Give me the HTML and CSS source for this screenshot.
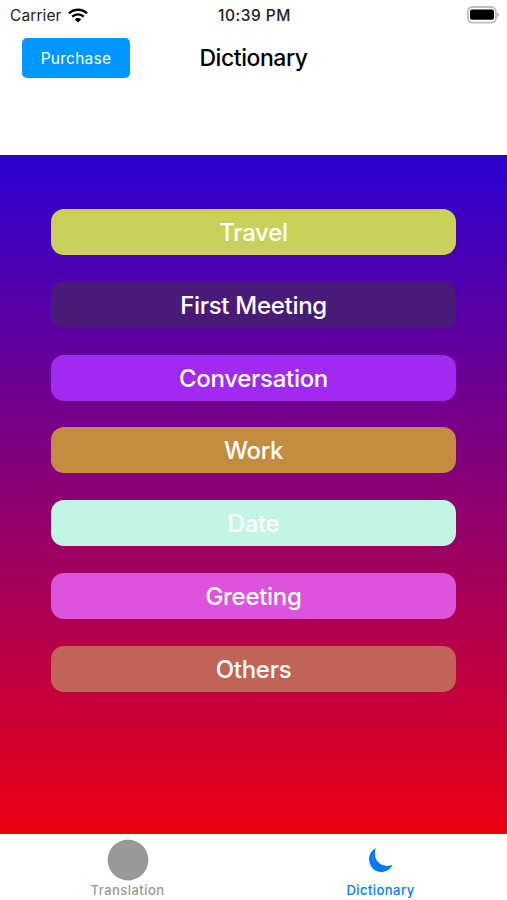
FILE: index.html
```html
<!DOCTYPE html>
<html lang="en">
<head>
    <meta charset="UTF-8">
    <meta name="viewport" content="width=device-width, initial-scale=1.0">
    <title>Dictionary</title>
    <link rel="stylesheet" href="styles.css">
</head>
<body>
    <!-- Status bar -->
    <div class="status-bar">
        <div class="carrier">
            <span>Carrier</span>
            <svg class="wifi" width="20" height="15" viewBox="0 0 20 15" fill="none" stroke="#000">
                <path d="M1 5.3a12.9 12.9 0 0 1 18 0" stroke-width="2.5"/>
                <path d="M4.2 8.7a8.3 8.3 0 0 1 11.6 0" stroke-width="2.4"/>
                <path d="M10 14.6 6.8 11.4a4.6 4.6 0 0 1 6.4 0z" fill="#000" stroke="none"/>
            </svg>
        </div>
        <span class="time">10:39 PM</span>
        <svg class="battery" width="33" height="18" viewBox="0 0 33 18">
            <rect x="1.9" y="1" width="28" height="15.6" rx="4.6" fill="#fff" stroke="#bdbdbd" stroke-width="1.8"/>
            <rect x="4" y="3.4" width="24" height="10.4" rx="2" fill="#000"/>
            <path d="M31.2 6.4q1.7.7 1.7 2.4t-1.7 2.4z" fill="#aaa"/>
        </svg>
    </div>

    <!-- Header -->
    <header class="header">
        <button type="button" class="purchase">Purchase</button>
        <h1>Dictionary</h1>
    </header>

    <!-- Categories -->
    <main class="categories">
        <button type="button" class="category travel">Travel</button>
        <button type="button" class="category meeting">First Meeting</button>
        <button type="button" class="category conversation">Conversation</button>
        <button type="button" class="category work">Work</button>
        <button type="button" class="category date">Date</button>
        <button type="button" class="category greeting">Greeting</button>
        <button type="button" class="category others">Others</button>
    </main>

    <!-- Tab bar -->
    <nav class="tab-bar">
        <a class="tab">
            <svg width="42" height="42" viewBox="0 0 42 42">
                <circle cx="21" cy="21" r="20.4" fill="#999"/>
            </svg>
            <span>Translation</span>
        </a>
        <a class="tab active">
            <svg width="42" height="42" viewBox="0 0 42 42">
                <path d="M15.9 9.2C10.8 11.7 8.3 17 9.3 22.5C10.5 29.2 15.8 33.3 21.8 33C26.7 32.7 30.6 30 32.6 25.8C28.4 27.6 23.4 27.2 19.5 24.2C15 20.5 13.7 14.8 15.9 9.2Z" fill="#007aff"/>
            </svg>
            <span>Dictionary</span>
        </a>
    </nav>
</body>
</html>
```

FILE: styles.css
```css
body {
    margin: 0;
    height: 900px;
    display: flex;
    flex-direction: column;
    overflow: hidden;
    font-family: Inter, "Liberation Sans", sans-serif;
    background-color: #fff;
}

button {
    border: none;
    padding: 0;
    font-family: inherit;
    color: #fff;
    cursor: pointer;
}

/* Status bar */
.status-bar {
    height: 30px;
    display: grid;
    grid-template-columns: 1fr auto 1fr;
    align-items: center;
    padding: 0 8px 0 10px;
    box-sizing: border-box;
    font-size: 15.5px;
    color: #222;
}

.carrier {
    display: flex;
    align-items: center;
    gap: 6px;
    letter-spacing: 0.1px;
}

.time {
    font-weight: 550;
    font-size: 15.5px;
    letter-spacing: 0.5px;
}

.battery {
    justify-self: end;
}

/* Header */
.header {
    height: 124.5px;
    display: grid;
    grid-template-columns: 1fr auto 1fr;
    align-items: start;
    padding: 0 22px;
    box-sizing: border-box;
}

.purchase {
    width: 108px;
    height: 40px;
    margin-top: 7.5px;
    padding-top: 1px;
    border-radius: 5px;
    background-color: #0096ff;
    font-size: 15.5px;
    letter-spacing: 0.25px;
}

.header h1 {
    margin: 14px 0 0;
    font-size: 23px;
    line-height: 28px;
    font-weight: 550;
    letter-spacing: -0.45px;
    color: #000;
}

/* Categories */
.categories {
    height: 679px;
    display: flex;
    flex-direction: column;
    gap: 26.8px;
    padding: 54.5px 51px 0 51px;
    box-sizing: border-box;
    background: linear-gradient(#2c00d3, #ec0013);
}

.category {
    height: 46px;
    padding-top: 1px;
    border-radius: 13px;
    font-size: 24px;
    font-weight: 550;
    letter-spacing: -0.3px;
}

.travel {
    background-color: #c9d15a;
}

.meeting {
    background-color: #481b78;
}

.conversation {
    background-color: #a12af0;
}

.work {
    background-color: #c48c41;
}

.date {
    background-color: #c3f5e4;
}

.greeting {
    background-color: #dc54dc;
}

.others {
    background-color: #c16457;
}

/* Tab bar */
.tab-bar {
    flex: 1;
    display: flex;
    padding-left: 1px;
}

.tab {
    flex: 1;
    display: flex;
    flex-direction: column;
    align-items: center;
    padding-top: 5px;
    font-size: 13px;
    line-height: 18px;
    font-weight: 500;
    letter-spacing: 0.45px;
    color: #999;
}

.active {
    color: #007aff;
}
```
